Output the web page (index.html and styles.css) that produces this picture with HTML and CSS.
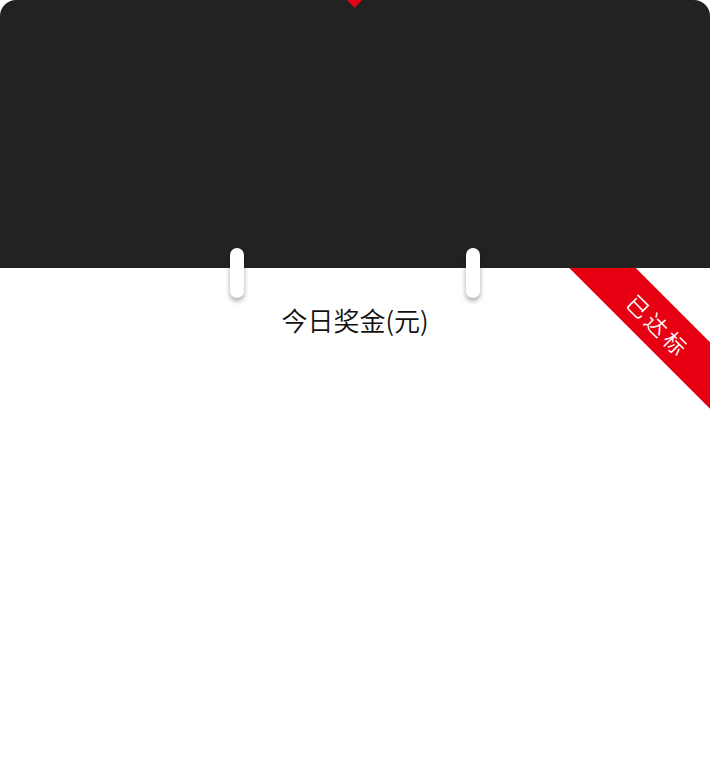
FILE: index.html
```html
<!DOCTYPE html>
<html lang="zh">
<head>
<meta charset="utf-8">
<link rel="stylesheet" href="styles.css">
</head>
<body>
<div class="card">
  <div class="header">
    <span class="notch"></span>
  </div>
  <span class="pin pin-left"></span>
  <span class="pin pin-right"></span>
  <div class="body">
    <div class="title">今日奖金(元)</div>
    <div class="ribbon"><span>已达标</span></div>
  </div>
</div>
</body>
</html>
```
FILE: styles.css
```css
html, body {
  margin: 0;
  padding: 0;
  background: #ffffff;
}
body {
  width: 710px;
  height: 768px;
  overflow: hidden;
  font-family: "Noto Sans CJK SC", "Noto Sans", sans-serif;
}
.card {
  position: relative;
  width: 710px;
}
.header {
  position: relative;
  height: 268px;
  background: #222222;
  border-radius: 16px 16px 0 0;
  overflow: hidden;
}
.notch {
  position: absolute;
  left: 348px;
  top: -8px;
  width: 13px;
  height: 13px;
  background: #e60012;
  transform: rotate(45deg);
}
.body {
  position: relative;
  height: 500px;
  overflow: hidden;
  background: #ffffff;
}
.pin {
  position: absolute;
  top: 248px;
  width: 14px;
  height: 50px;
  border-radius: 7px;
  background: #ffffff;
  box-shadow: 0 3px 5px rgba(0, 0, 0, 0.35);
  z-index: 2;
}
.pin-left { left: 230px; }
.pin-right { left: 466px; }
.title {
  padding-top: 32px;
  text-align: center;
  font-size: 26px;
  font-weight: 350;
  line-height: 40px;
  color: #111111;
}
.ribbon {
  position: absolute;
  left: 548px;
  top: 32px;
  width: 220px;
  height: 47px;
  background: #e60012;
  transform: rotate(45deg);
  display: flex;
  align-items: center;
  justify-content: center;
}
.ribbon span {
  color: #ffffff;
  font-size: 22px;
  font-weight: 350;
  letter-spacing: 4px;
  padding-left: 4px;
  line-height: 1;
}
```
